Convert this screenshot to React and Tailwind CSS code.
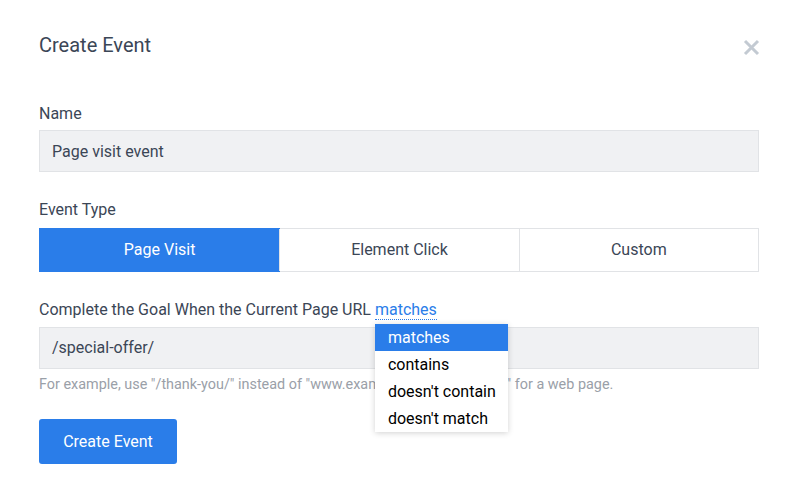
import { useState } from "react";

const types = ["Page Visit", "Element Click", "Custom"];
const options = ["matches", "contains", "doesn't contain", "doesn't match"];

export default function App() {
    const [active, setActive] = useState(0);
    const [match, setMatch] = useState("matches");

    return (
        <div className="w-[797px] h-[484px] bg-white text-[#3b4656] font-['Roboto',sans-serif]">
            <div className="pl-[39px] pr-[37px] pt-[33px]">
                <div className="flex items-center justify-between">
                    <h1 className="text-[20px] leading-6 text-[#3b4656]">Create Event</h1>
                    <button className="mt-[5px] text-[#c3cad2]">
                        <svg width="17" height="17" viewBox="0 0 17 17">
                            <path d="M2 2 L15 15 M15 2 L2 15" stroke="currentColor" strokeWidth="3" strokeLinecap="butt" />
                        </svg>
                    </button>
                </div>

                <div className="mt-[47px] text-[16px] leading-5">Name</div>
                <div className="mt-[6px] mr-px h-[42px] flex items-center px-[12px] pt-px bg-[#f0f1f3] border border-[#e1e3e6] text-[16px]">
                    Page visit event
                </div>

                <div className="mt-[28px] text-[16px] leading-5">Event Type</div>
                <div className="mt-[8px] mr-px grid grid-cols-3 h-[44px] border border-[#e1e3e6]">
                    {types.map((t, i) => (
                        <button
                            key={t}
                            onClick={() => setActive(i)}
                            className={
                                i === active
                                    ? "bg-[#2a7de9] text-white text-[16px] -m-px"
                                    : "bg-white text-[#3b4656] text-[16px] border-l border-[#e1e3e6]"
                            }
                        >
                            {t}
                        </button>
                    ))}
                </div>

                <div className="mt-[28px] text-[16px] leading-5">
                    Complete the Goal When the Current Page URL{" "}
                    <span className="relative">
                        <span className="text-[#2a7de9] border-b border-dotted border-[#2a7de9]">{match}</span>
                        <div className="absolute left-0 top-[24px] w-[133px] bg-white shadow-[0_1px_6px_rgba(0,0,0,0.18)] z-10">
                            {options.map((o) => (
                                <div
                                    key={o}
                                    onClick={() => setMatch(o)}
                                    className={
                                        o === match
                                            ? "h-[27px] flex items-center pl-[13px] bg-[#2a7de9] text-white text-[16px] whitespace-nowrap"
                                            : "h-[27px] flex items-center pl-[13px] text-black text-[16px] whitespace-nowrap"
                                    }
                                >
                                    {o}
                                </div>
                            ))}
                        </div>
                    </span>
                </div>
                <div className="mt-[7px] mr-px h-[42px] flex items-center px-[12px] bg-[#f0f1f3] border border-[#e1e3e6] text-[16px]">
                    /special-offer/
                </div>
                <p className="mt-[6px] text-[14.4px] leading-5 text-[#9aa0a8]">
                    For example, use "/thank-you/" instead of "www.example.com/thank-you/" for a web page.
                </p>

                <button className="mt-[24px] w-[138px] h-[45px] rounded-[3px] bg-[#2a7de9] text-white text-[16px]">
                    Create Event
                </button>
            </div>
        </div>
    );
}
